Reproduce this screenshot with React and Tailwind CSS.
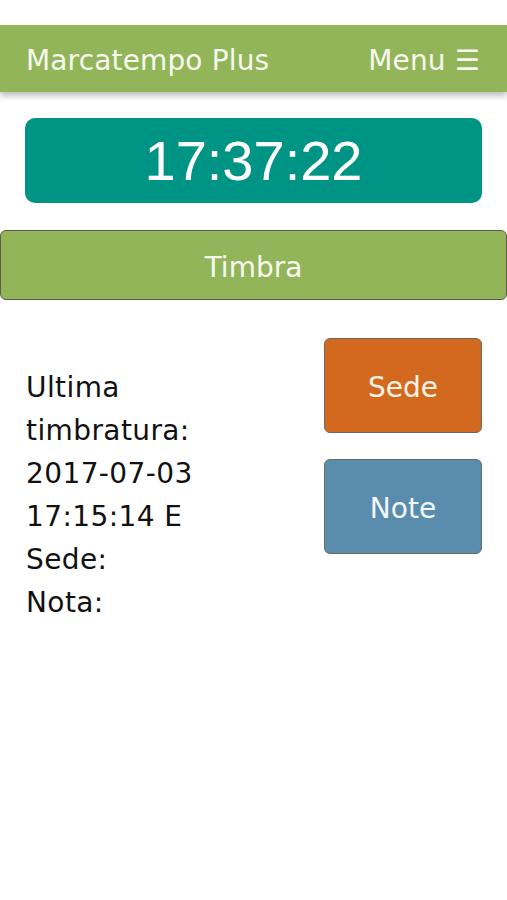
export default function App() {
  const font = { fontFamily: '"DejaVu Sans", Verdana, sans-serif' };
  return (
    <div className="w-[507px] h-[900px] bg-white overflow-hidden" style={font}>
      <div className="h-[25px]" />
      <header className="h-[67px] bg-[#93b55a] flex items-center justify-between pl-[26px] pr-[27px] pt-[4px] text-[28px] tracking-[0.15px] text-[#f7f9ee] shadow-[0_4px_6px_rgba(0,0,0,0.25)] relative">
        <span>Marcatempo Plus</span>
        <span>Menu ☰</span>
      </header>
      <div className="px-[25px] pt-[26px]">
        <div className="h-[85px] rounded-[10px] bg-[#009485] flex items-center justify-center text-white text-[56px]" style={{ fontFamily: '"Liberation Sans", Arial, sans-serif' }}>
          17:37:22
        </div>
      </div>
      <div className="pt-[27px]">
        <button className="w-full h-[70px] rounded-[6px] border-[1.5px] border-[#5b5d4c] bg-[#93b55a] pt-[5px] text-[28px] text-[#f7f9ee] flex items-center justify-center">
          Timbra
        </button>
      </div>
      <div className="flex justify-between pl-[26px] pr-[25px] pt-[38px]">
        <div className="pt-[28px] text-[28px] leading-[43px] tracking-[0.4px] text-[#111]">
          <div>Ultima</div>
          <div>timbratura:</div>
          <div>2017-07-03</div>
          <div>17:15:14 E</div>
          <div>Sede:</div>
          <div>Nota:</div>
        </div>
        <div className="flex flex-col gap-[26px]">
          <button className="w-[158px] h-[95px] rounded-[6px] border border-[#6a6a60] bg-[#d3691f] pt-[5px] text-[28px] text-[#fbf3e8] flex items-center justify-center">
            Sede
          </button>
          <button className="w-[158px] h-[95px] rounded-[6px] border border-[#6a6a60] bg-[#5a8cad] pt-[5px] text-[28px] text-[#f2f7fa] flex items-center justify-center">
            Note
          </button>
        </div>
      </div>
    </div>
  );
}
